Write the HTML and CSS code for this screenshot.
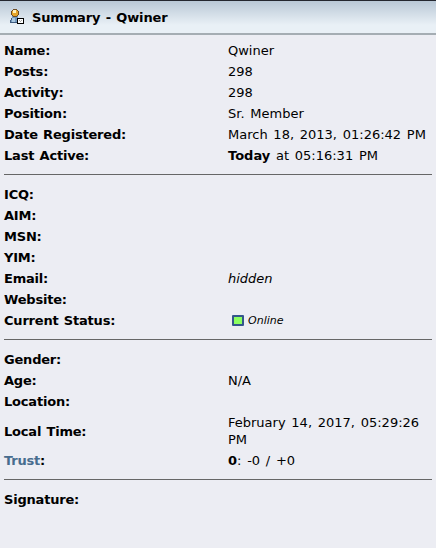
FILE: index.html
```html
<!DOCTYPE html>
<html lang="en">
<head>
    <meta charset="UTF-8">
    <title>Summary - Qwiner</title>
    <link rel="stylesheet" href="styles.css">
</head>
<body>
    <div class="titlebg">
        <svg class="user-icon" width="16" height="16" viewBox="0 0 16 16" shape-rendering="crispEdges">
            <path d="M3 7h6v2h1v5H1v-3h1V9h1z" fill="#7398bd"/>
            <path d="M3 9h3v4H3z" fill="#a9c8e2"/>
            <path d="M1 11h1v2H1zM2 9h1v2H2zM1 13h8v1H1z" fill="#3f5c80"/>
            <path d="M4 0h4v1h1v1h1v4H9v1H8v1H5V7H4V6H3V1h1z" fill="#e5a52a"/>
            <path d="M4 1h3v3H4z" fill="#fff2bd"/>
            <path d="M4 0h4v1H4zM3 1h1v1H3zM2 2h1v4H2zM8 1h1v1H8zM9 2h1v4H9zM8 6h1v1H8zM3 6h1v1H3zM4 7h4v1H4z" fill="#6d4c25"/>
            <path d="M8 9h7v6H8z" fill="#000"/>
            <path d="M9 10h5v4H9z" fill="#fff"/>
            <path d="M10 11h1v1h-1zM12 11h1v1h-1zM11 12h1v1h-1z" fill="#aaa"/>
        </svg>
        <span>Summary - Qwiner</span>
    </div>
    <table class="profile">
        <tr><td class="label">Name:</td><td>Qwiner</td></tr>
        <tr><td class="label">Posts:</td><td>298</td></tr>
        <tr><td class="label">Activity:</td><td>298</td></tr>
        <tr><td class="label">Position:</td><td>Sr. Member</td></tr>
        <tr><td class="label">Date Registered:</td><td>March 18, 2013, 01:26:42 PM</td></tr>
        <tr><td class="label">Last Active:</td><td><b>Today</b> at 05:16:31 PM</td></tr>
        <tr class="divider"><td colspan="2"><hr></td></tr>
        <tr><td class="label">ICQ:</td><td></td></tr>
        <tr><td class="label">AIM:</td><td></td></tr>
        <tr><td class="label">MSN:</td><td></td></tr>
        <tr><td class="label">YIM:</td><td></td></tr>
        <tr><td class="label">Email:</td><td><i>hidden</i></td></tr>
        <tr><td class="label">Website:</td><td></td></tr>
        <tr><td class="label">Current Status:</td><td><i class="status"><span class="online"></span>Online</i></td></tr>
        <tr class="divider"><td colspan="2"><hr></td></tr>
        <tr><td class="label">Gender:</td><td></td></tr>
        <tr><td class="label">Age:</td><td>N/A</td></tr>
        <tr><td class="label">Location:</td><td></td></tr>
        <tr><td class="label">Local Time:</td><td>February 14, 2017, 05:29:26 PM</td></tr>
        <tr><td class="label"><a href="#">Trust</a>:</td><td><b>0</b>: -0 / +0</td></tr>
        <tr class="divider"><td colspan="2"><hr></td></tr>
        <tr><td class="label">Signature:</td><td></td></tr>
    </table>
</body>
</html>
```

FILE: styles.css
```css
* { margin: 0; padding: 0; box-sizing: border-box; }
body { font-family: Verdana, "DejaVu Sans", sans-serif; font-size: 13px; line-height: 17px; color: #000; background-color: #ecedf3; }
.titlebg { display: flex; align-items: center; height: 35px; padding: 0 9px; border-top: 1px solid #24272f; border-bottom: 2px solid #a5adb3; background: linear-gradient(#b9c8d6, #e9f0f6 75%); font-weight: bold; letter-spacing: -0.15px; word-spacing: 1px; }
.user-icon { margin-right: 7px; }
.profile { width: 428px; margin: 5px 4px 0; border-collapse: collapse; table-layout: fixed; word-spacing: 1.6px; }
.profile td { height: 21px; padding: 2px 0; vertical-align: middle; }
.profile .label { width: 224px; font-weight: bold; letter-spacing: -0.2px; word-spacing: 1px; }
.profile a { color: #476c8e; text-decoration: none; }
.profile .divider td { height: 18px; padding: 8px 0 9px; }
hr { height: 1px; border: none; background-color: #666; }
.status { display: flex; align-items: center; padding-left: 4px; font-size: 11px; }
.online { width: 12px; height: 11px; margin-right: 4px; border: 2px solid #34568b; border-radius: 1px; background-color: #8cff60; }
```
